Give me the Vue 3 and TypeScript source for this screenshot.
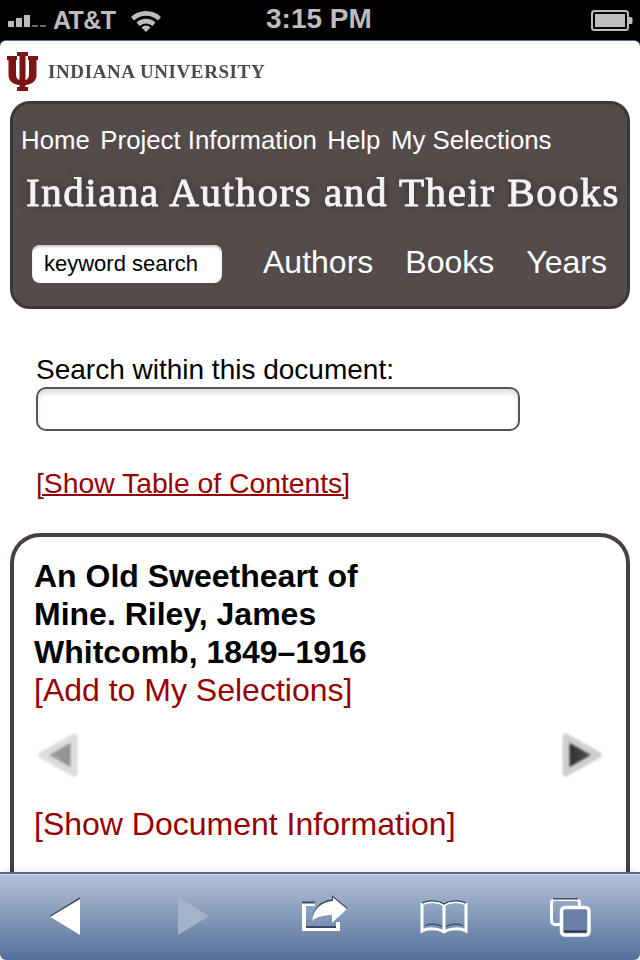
<template>
  <div class="phone">
    <!-- status bar -->
    <div class="status">
      <div class="status-left">
        <span class="signal">
          <i class="b on" style="height: 6px"></i>
          <i class="b on" style="height: 9px"></i>
          <i class="b on" style="height: 12px"></i>
          <i class="b" style="height: 2px"></i>
          <i class="b" style="height: 2px"></i>
        </span>
        <span class="carrier">AT&amp;T</span>
        <svg class="wifi" width="32" height="24" viewBox="0 0 32 24">
          <path d="M1 9 A22 22 0 0 1 31 9 L28 12.5 A17.5 17.5 0 0 0 4 12.5 Z" fill="#bdbdbd" />
          <path d="M6.5 14.5 A14 14 0 0 1 25.5 14.5 L22.5 18 A9.5 9.5 0 0 0 9.5 18 Z" fill="#bdbdbd" />
          <path d="M11.5 19.5 A6 6 0 0 1 20.5 19.5 L16 24 Z" fill="#bdbdbd" />
        </svg>
      </div>
      <span class="clock">3:15 PM</span>
      <svg class="battery" width="42" height="21" viewBox="0 0 42 21">
        <rect x="1" y="1" width="36" height="19" rx="2.5" fill="none" stroke="#bdbdbd" stroke-width="2" />
        <rect x="4" y="4" width="30" height="13" fill="#bdbdbd" />
        <path d="M38 7 h2 a1.5 1.5 0 0 1 1.5 1.5 v4 a1.5 1.5 0 0 1 -1.5 1.5 h-2 z" fill="#bdbdbd" />
      </svg>
    </div>

    <div class="viewport">
      <div class="logo-row">
        <svg class="trident" width="34" height="41" viewBox="0 0 34 41">
          <path
            fill="#7d1416"
            d="M11 1H22V5H19.5V29C22 28.5 23 26 23 23V9H22V5H32V9H30.5V24C30.5 30 26 33.5 19.5 34V36H22V40H11V36H13.5V34C7 33.5 2.5 30 2.5 24V9H1V5H11V9H10V23C10 26 11 28.5 13.5 29V5H11Z"
          />
        </svg>
        <span class="iu-name">INDIANA UNIVERSITY</span>
      </div>

      <header class="banner">
        <nav class="top-nav">
          <a v-for="item in topLinks" :key="item">{{ item }}</a>
        </nav>
        <div class="site-title">Indiana Authors and Their Books</div>
        <div class="tools">
          <div class="keyword">keyword search</div>
          <a v-for="item in browseLinks" :key="item">{{ item }}</a>
        </div>
      </header>

      <section class="doc-search">
        <label>Search within this document:</label>
        <div class="doc-input"></div>
        <a class="toc">[Show Table of Contents]</a>
      </section>

      <section class="doc-card">
        <h1>An Old Sweetheart of<br />Mine. Riley, James<br />Whitcomb, 1849–1916</h1>
        <a class="red">[Add to My Selections]</a>
        <div class="pager">
          <svg class="arrow" width="48" height="54" viewBox="0 0 48 54">
            <defs>
              <linearGradient id="prev-fill" x1="0" x2="1" y1="0" y2="0">
                <stop offset="0" stop-color="#a8a8a8" />
                <stop offset="1" stop-color="#8c8c8c" />
              </linearGradient>
            </defs>
            <path d="M40 9 L8 27 L40 45 Z" fill="url(#prev-fill)" stroke="#dcdcdc" stroke-width="7" stroke-linejoin="round" />
          </svg>
          <svg class="arrow" width="48" height="54" viewBox="0 0 48 54">
            <defs>
              <linearGradient id="next-fill" x1="0" x2="1" y1="0" y2="0">
                <stop offset="0" stop-color="#2c2c2c" />
                <stop offset="1" stop-color="#5a5a5a" />
              </linearGradient>
            </defs>
            <path d="M8 9 L40 27 L8 45 Z" fill="url(#next-fill)" stroke="#cfcfcf" stroke-width="7" stroke-linejoin="round" />
          </svg>
        </div>
        <a class="red">[Show Document Information]</a>
      </section>
    </div>

    <!-- safari toolbar -->
    <footer class="toolbar">
      <svg class="t-back" width="32" height="38" viewBox="0 0 32 38">
        <path d="M31 0 L0 19 L31 38 Z" fill="#fff" />
        <path d="M31 0 L0 19 L1.5 19.8 L31 2 Z" fill="#3b4a60" />
      </svg>
      <svg class="t-forward" width="31" height="38" viewBox="0 0 31 38">
        <path d="M0 0 L31 19 L0 38 Z" fill="#a5b3c9" />
      </svg>
      <svg class="t-share" width="47" height="38" viewBox="0 0 47 38">
        <path d="M13 9 H2 V34 H36 V27" fill="none" stroke="#fff" stroke-width="4" />
        <path d="M0 7.5 H13" stroke="#3b4a60" stroke-width="2" />
        <path d="M4 32 H34" stroke="#3b4a60" stroke-width="2" />
        <path d="M30 0 L46 13 L30 28 V20 C22 20 14 22 10 26 C10 14 19 6 30 6 Z" fill="#fff" />
        <path d="M30 0 L46 13 L45 14 L31 2.5 V6 C19 6.5 11 15 10 26 C10 14 19 5 30 4.5 Z" fill="#3b4a60" />
      </svg>
      <svg class="t-book" width="48" height="34" viewBox="0 0 48 34">
        <path
          d="M24 5 C18 1 7 1 2 4 V31 C7 28 18 28 24 32 C30 28 41 28 46 31 V4 C41 1 30 1 24 5 Z M24 5 V32"
          fill="none"
          stroke="#fff"
          stroke-width="3"
        />
        <path d="M2 3 C8 0 18 0 24 4 C30 0 40 0 46 3" fill="none" stroke="#3b4a60" stroke-width="1.5" />
        <path d="M5 25.5 C10 23.5 18 23.5 22 26.5 M26 26.5 C30 23.5 38 23.5 43 25.5" fill="none" stroke="#3b4a60" stroke-width="1.2" />
      </svg>
      <svg class="t-tabs" width="41" height="39" viewBox="0 0 41 39">
        <rect x="1.5" y="1.5" width="28" height="25" rx="3.5" fill="none" stroke="#fff" stroke-width="3" />
        <path d="M3 0.8 H28" stroke="#3b4a60" stroke-width="1.5" />
        <rect x="11.5" y="9.5" width="27.5" height="27.5" rx="3.5" fill="#6a80a4" stroke="#fff" stroke-width="3.5" />
        <path d="M14 33.5 H36.5" stroke="#2a3344" stroke-width="2" />
      </svg>
    </footer>
  </div>
</template>

<script setup lang="ts">
const topLinks: string[] = ['Home', 'Project Information', 'Help', 'My Selections']
const browseLinks: string[] = ['Authors', 'Books', 'Years']
</script>

<style>
html,
body {
  margin: 0;
  background: #000;
}
</style>

<style scoped>
.phone {
  width: 640px;
  height: 960px;
  background: #000;
  display: flex;
  flex-direction: column;
  overflow: hidden;
  font-family: "Liberation Sans", Arial, sans-serif;
}

/* status bar */
.status {
  height: 40px;
  flex: none;
  display: flex;
  align-items: center;
  justify-content: space-between;
  padding: 0 7px 0 8px;
  color: #bdbdbd;
  position: relative;
  box-sizing: border-box;
}

.status-left {
  display: flex;
  align-items: center;
}

.signal {
  display: flex;
  align-items: flex-end;
  gap: 2px;
  width: 44px;
  height: 12px;
  margin-top: 2px;
}

.b {
  display: block;
  width: 6px;
  background: #666;
}

.b.on {
  background: #bdbdbd;
}

.carrier {
  font-size: 25px;
  font-weight: 700;
  letter-spacing: -0.6px;
  margin-left: 1px;
}

.wifi {
  margin-left: 15px;
}

.clock {
  font-size: 28px;
  font-weight: 700;
  position: absolute;
  left: 266px;
  top: 3px;
}

.viewport {
  flex: 1;
  min-height: 0;
  background: #fff;
  border-top: 1px solid #4f6f9c;
  border-radius: 6px 6px 0 0;
  overflow: hidden;
}

/* logo */
.logo-row {
  height: 60px;
  display: flex;
  align-items: center;
  padding-left: 6px;
  box-sizing: border-box;
}

.trident {
  filter: blur(0.4px);
}

.iu-name {
  font-family: "Liberation Serif", serif;
  font-weight: 700;
  font-size: 19px;
  color: #4a4a4a;
  margin: 2px 0 0 8px;
  letter-spacing: 0.6px;
  filter: blur(0.6px);
}

/* banner */
.banner {
  margin: 0 10px;
  height: 208px;
  box-sizing: border-box;
  background: #544b4b;
  border: 3px solid #3d3737;
  border-radius: 20px;
  color: #fff;
  display: flex;
  flex-direction: column;
}

.top-nav {
  display: flex;
  gap: 10.5px;
  font-size: 25.8px;
  padding: 20px 0 0 8px;
  line-height: 32px;
}

.site-title {
  font-family: "Liberation Serif", serif;
  font-size: 41px;
  line-height: 44px;
  letter-spacing: 1.55px;
  margin: 14px 0 0 13px;
  white-space: nowrap;
  color: #f4f2f2;
  -webkit-text-stroke: 1px #f4f2f2;
  text-shadow: 0 0 9px #2f2a2a;
  filter: blur(0.6px);
}

.tools {
  display: flex;
  align-items: center;
  font-size: 32px;
  margin-top: 27px;
  padding-left: 19px;
}

.tools a {
  margin-left: 32px;
}

.tools a:first-of-type {
  margin-left: 41px;
}

.keyword {
  width: 190px;
  height: 38px;
  box-sizing: border-box;
  margin-top: 4px;
  background: #fff;
  border-radius: 8px;
  box-shadow: inset 0 2px 2px #ccc;
  color: #000;
  font-size: 22px;
  line-height: 38px;
  padding-left: 12px;
}

/* search within */
.doc-search {
  padding: 45px 36px 0;
  display: flex;
  flex-direction: column;
  align-items: flex-start;
}

.doc-search label {
  font-size: 28px;
  line-height: 32px;
  color: #000;
}

.doc-input {
  width: 484px;
  height: 44px;
  box-sizing: border-box;
  margin-top: 1px;
  background: #fff;
  border: 2px solid #555;
  border-radius: 10px;
  box-shadow: inset 0 4px 4px #ddd;
}

.toc {
  font-size: 28.3px;
  line-height: 32px;
  color: #990000;
  text-decoration: underline;
  text-decoration-thickness: 2px;
  margin: 36px 0 1px;
}

/* document card */
.doc-card {
  margin: 33px 10px 0;
  height: 400px;
  box-sizing: border-box;
  border: 4px solid #483f3f;
  border-bottom: 0;
  border-radius: 30px 30px 0 0;
  padding: 20px 20px 0;
  display: flex;
  flex-direction: column;
  align-items: flex-start;
}

.doc-card h1 {
  margin: 0;
  font-size: 32px;
  line-height: 38px;
  font-weight: 700;
  color: #000;
}

.red {
  font-size: 32px;
  line-height: 38px;
  color: #990000;
}

.pager {
  align-self: stretch;
  display: flex;
  justify-content: space-between;
  margin: 19px 0 23px;
}

.arrow {
  filter: blur(1px);
}

/* toolbar */
.toolbar {
  position: absolute;
  left: 0;
  top: 872px;
  width: 640px;
  height: 88px;
  box-sizing: border-box;
  border-top: 2px solid #556a85;
  background: linear-gradient(#b3c2d8, #54709a);
  box-shadow: inset 0 1px 0 #ced8e6, 0 -6px 6px -3px rgba(0, 0, 0, 0.08);
  border-radius: 0 0 6px 6px;
  display: flex;
  align-items: center;
  padding-left: 49px;
}

.toolbar svg {
  flex: none;
}

.t-back {
  margin-bottom: 2px;
}

.t-forward {
  margin: 0 0 2px 97px;
}

.t-share {
  margin: 0 0 6px 93px;
}

.t-book {
  margin: 0 0 0 71px;
}

.t-tabs {
  margin: 1px 0 0 82px;
}
</style>
